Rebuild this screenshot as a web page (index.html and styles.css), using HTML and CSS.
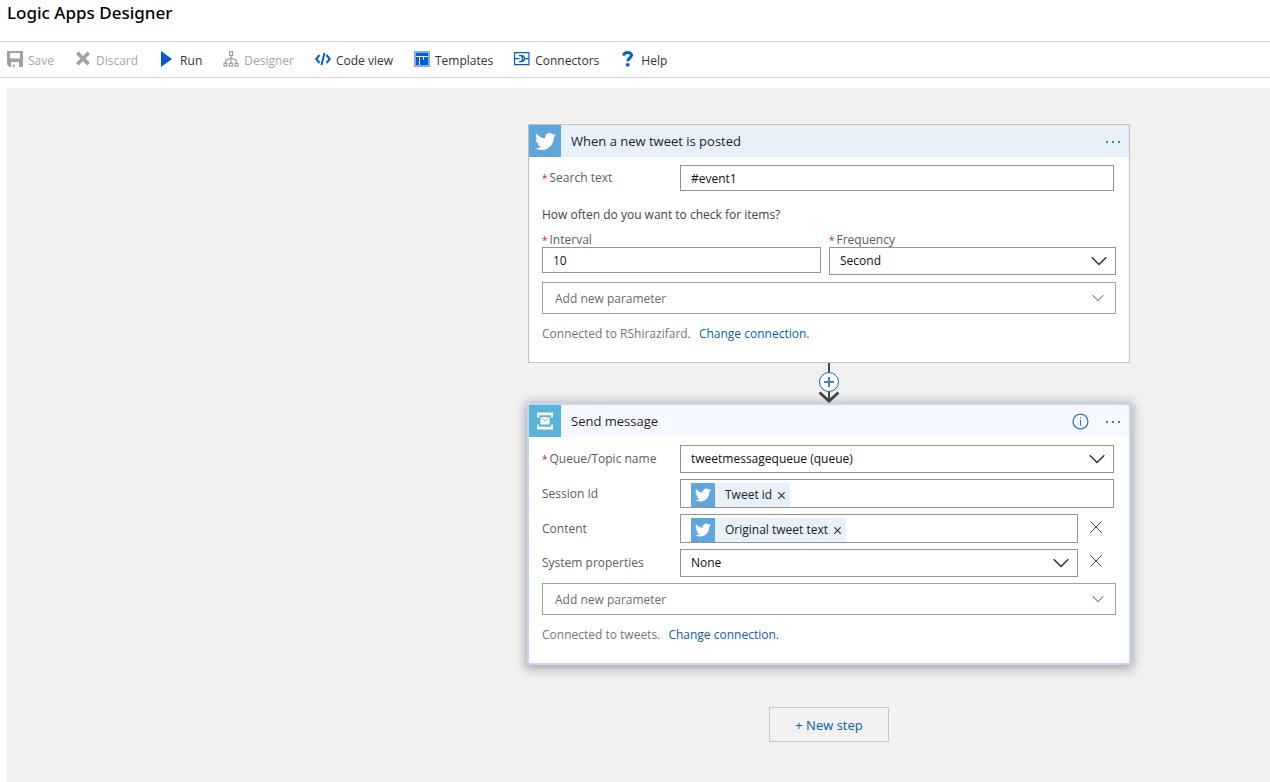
FILE: index.html
```html
<!DOCTYPE html>
<html lang="en">
<head>
<meta charset="utf-8">
<title>Logic Apps Designer</title>
<link rel="stylesheet" href="styles.css">
</head>
<body>
<svg class="sprite" aria-hidden="true">
  <symbol id="bird" viewBox="0 0 24 24"><path d="M23.9 4.6a10 10 0 0 1-2.8.8 4.900 4.900 0 0 0 2.200-2.700c-1 .6-2 1-3.100 1.200a4.900 4.900 0 0 0-8.400 4.500C7.700 8.200 4.100 6.200 1.700 3.200a4.900 4.900 0 0 0 1.500 6.600c-.8 0-1.600-.3-2.200-.6v.1a4.900 4.900 0 0 0 3.900 4.800c-.7.200-1.500.2-2.200.1a4.900 4.900 0 0 0 4.600 3.400A9.900 9.900 0 0 1 0 19.500a14 14 0 0 0 7.500 2.200c9.100 0 14-7.500 14-14v-.6c1-.7 1.800-1.600 2.400-2.500z"/></symbol>
  <symbol id="chevron" viewBox="0 0 16 16"><path d="M.7 4.200 8 11.500l7.300-7.300"/></symbol>
  <symbol id="cross" viewBox="0 0 12 12"><path d="m.4.4 11.200 11.200M11.600.4.4 11.600"/></symbol>
</svg>

<header class="page-header"><h1>Logic Apps Designer</h1></header>

<nav class="toolbar" aria-label="Designer commands">
  <button class="command" type="button" disabled>
    <svg class="command-icon" viewBox="0 0 16 16"><path fill="#a0a0a0" fill-rule="evenodd" d="M0 0h16v16H2.500L0 13.500zM3 2v5.500h10V2zM4 11v5h1.500v-2.500h2V16H12v-5z"/></svg>Save</button>
  <button class="command" type="button" disabled>
    <svg class="command-icon" viewBox="0 0 16 16"><path fill="none" stroke="#a0a0a0" stroke-width="3.600" d="m2.300 1.800 11.400 11.400m0-11.400L2.300 13.200"/></svg>Discard</button>
  <button class="command" type="button">
    <svg class="command-icon" viewBox="0 0 16 16"><path fill="#015cda" d="M2 0v16l11-8z"/></svg>Run</button>
  <button class="command" type="button" disabled>
    <svg class="command-icon" viewBox="0 0 16 16"><path fill="none" stroke="#a0a0a0" stroke-width="1.200" d="M6.500.7h3v3.600h-3zM8 4.300V12M2.500 12V9.500L8 7l5.500 2.500V12M1 12.300h3v2.900H1zm5.500 0h3v2.900h-3zm5.500 0h3v2.900h-3z"/></svg>Designer</button>
  <button class="command" type="button">
    <svg class="command-icon" viewBox="0 0 16 16"><path fill="none" stroke="#015cda" stroke-width="2" d="M4.500 4 1.200 8l3.300 4M11.500 4l3.300 4-3.300 4M9.500 2l-3 12"/></svg>Code view</button>
  <button class="command" type="button">
    <svg class="command-icon" viewBox="0 0 16 16"><path fill="#80aeed" d="M0 0h16v16H0z"/><path fill="#015cda" d="M2 2h12v3H2z"/><path fill="#fff" d="M2 5h12v1H2zM5 6h1v8H5zM9 6h1v3H9z"/><path fill="#015cda" d="M2 6h3v8H2zm4 0h3v8H6zm4 0h4v8h-4zM9 9h1v5H9z"/></svg>Templates</button>
  <button class="command" type="button">
    <svg class="command-icon" viewBox="0 0 16 16"><path fill="none" stroke="#015cda" stroke-width="1.200" d="M.6 1.600h14.300v12H.6zM.6 7.600h5M5 4.600h2.500a3 3 0 0 1 0 6H5M7 6.100h1.500v3H7M10.500 7.600H15"/></svg>Connectors</button>
  <button class="command" type="button">
    <svg class="command-icon" viewBox="0 0 16 16"><path fill="none" stroke="#015cda" stroke-width="2.900" d="M3.600 4.600C4 .5 11.600.5 11.600 4.300c0 2.500-3.800 2.800-3.800 6"/><circle cx="7.700" cy="13.800" r="1.900" fill="#015cda"/></svg>Help</button>
</nav>

<main class="canvas">
  <section class="card" aria-label="When a new tweet is posted">
    <header class="card-header">
      <span class="card-logo twitter"><svg class="logo-bird"><use href="#bird"/></svg></span>
      <h2>When a new tweet is posted</h2>
      <button class="more" type="button" aria-label="More options"><i></i><i></i><i></i></button>
    </header>
    <div class="card-body">
      <div class="row">
        <label class="required" for="search">Search text</label>
        <input class="box" id="search" type="text" value="#event1">
      </div>
      <p class="question">How often do you want to check for items?</p>
      <div class="pair">
        <div class="field">
          <label class="required" for="interval">Interval</label>
          <input class="box" id="interval" type="text" value="10">
        </div>
        <div class="field">
          <label class="required" for="frequency">Frequency</label>
          <div class="select"><select class="box" id="frequency"><option>Second</option></select><svg class="chevron"><use href="#chevron"/></svg></div>
        </div>
      </div>
      <div class="select add"><select class="box" aria-label="Add new parameter"><option>Add new parameter</option></select><svg class="chevron"><use href="#chevron"/></svg></div>
      <p class="connection">Connected to RShirazifard. <a href="#">Change connection.</a></p>
    </div>
  </section>

  <button class="connector" type="button" aria-label="Insert a step">
    <svg viewBox="0 0 24 40"><path fill="none" stroke="#484848" stroke-width="2" d="M12 0v38"/><path fill="none" stroke="#484848" stroke-width="3" d="m2.500 29.500 9.500 8.500 9.500-8.500"/><circle cx="12" cy="19" r="9.500" fill="#fff" stroke="#1068bf"/><path fill="none" stroke="#3c82c8" stroke-width="2" d="M12 14v10M7 19h10"/></svg>
  </button>

  <section class="card selected" aria-label="Send message">
    <header class="card-header">
      <span class="card-logo bus"><svg class="logo-bus" viewBox="0 0 18 18"><path fill="#fff" d="M1 .5h16v5h-2V3.200H3v2.300H1zM1 17.500h16v-5h-2v2.300H3v-2.300H1zM4.500 5h9v7.500h-9z"/><path fill="none" stroke="#59b4d9" stroke-width=".8" d="m4.700 5.300 4.300 3.500 4.300-3.500"/></svg></span>
      <h2>Send message</h2>
      <button class="info" type="button" aria-label="Information"><svg viewBox="0 0 16 16"><circle cx="8" cy="8" r="7" fill="none" stroke="#2b78c5" stroke-width="1.200"/><path fill="#2b78c5" d="M7.500 6.500h1V12h-1zm0-2.500h1v1.200h-1z"/></svg></button>
      <button class="more" type="button" aria-label="More options"><i></i><i></i><i></i></button>
    </header>
    <div class="card-body">
      <div class="row">
        <label class="required" for="queue">Queue/Topic name</label>
        <div class="select"><select class="box" id="queue"><option>tweetmessagequeue (queue)</option></select><svg class="chevron"><use href="#chevron"/></svg></div>
      </div>
      <div class="row">
        <span class="label">Session Id</span>
        <div class="tokens"><span class="token"><span class="token-logo"><svg><use href="#bird"/></svg></span>Tweet id<button type="button" aria-label="Remove Tweet id"><svg><use href="#cross"/></svg></button></span></div>
      </div>
      <div class="row removable">
        <span class="label">Content</span>
        <div class="tokens"><span class="token"><span class="token-logo"><svg><use href="#bird"/></svg></span>Original tweet text<button type="button" aria-label="Remove Original tweet text"><svg><use href="#cross"/></svg></button></span></div>
        <button class="remove" type="button" aria-label="Remove Content"><svg><use href="#cross"/></svg></button>
      </div>
      <div class="row removable">
        <label for="system">System properties</label>
        <div class="select"><select class="box" id="system"><option>None</option></select><svg class="chevron"><use href="#chevron"/></svg></div>
        <button class="remove" type="button" aria-label="Remove System properties"><svg><use href="#cross"/></svg></button>
      </div>
      <div class="select add"><select class="box" aria-label="Add new parameter"><option>Add new parameter</option></select><svg class="chevron"><use href="#chevron"/></svg></div>
      <p class="connection">Connected to tweets. <a href="#">Change connection.</a></p>
    </div>
  </section>

  <button class="new-step" type="button">+ New step</button>
</main>
</body>
</html>
```
FILE: styles.css
```css
* { box-sizing: border-box; }

body {
  display: flex;
  flex-direction: column;
  min-height: 100vh;
  margin: 0;
  background: #fff;
  color: #000;
  font: 12px/16px "Open Sans", "Noto Sans", sans-serif;
}

h1, h2, p { margin: 0; }

button {
  padding: 0;
  border: 0;
  background: none;
  color: inherit;
  font: inherit;
  cursor: pointer;
}

svg { display: block; }
.sprite { display: none; }

/* Page header and toolbar */
.page-header {
  height: 42px;
  padding-left: 7px;
  border-bottom: 1px solid #d2d2d2;
}

.page-header h1 {
  font-family: "Noto Sans", "Open Sans", sans-serif;
  font-size: 17px;
  font-weight: 500;
  line-height: 26px;
}

.toolbar {
  display: flex;
  gap: 21px;
  height: 36px;
  padding: 2px 0 0 7px;
  border-bottom: 1px solid #d2d2d2;
}

.command {
  display: flex;
  align-items: center;
  gap: 5px;
  color: #333;
  white-space: nowrap;
}

.command:disabled { color: #a6a6a6; }

.command-icon {
  width: 16px;
  height: 16px;
  margin-bottom: 3px;
}

/* Design canvas */
.canvas {
  display: flex;
  flex: 1;
  flex-direction: column;
  align-items: center;
  margin: 10px 0 0 7px;
  padding: 36px 0 40px 381px;
  background: #f1f1f1;
}

.card {
  width: 602px;
  border: 1px solid #c1c1c1;
  background: #fff;
}

.selected {
  width: 604px;
  border: 2px solid #c3d5fc;
  box-shadow: 0 2px 10px 2px rgba(0, 0, 0, 0.3);
}

.card-header {
  display: flex;
  align-items: center;
  height: 32px;
  padding-right: 9px;
  background: #e6f1fa;
}

.selected .card-header { background: #f5f9ff; }

.card-header h2 {
  flex: 1;
  padding-left: 10px;
  color: #1f1f1f;
  font-size: 13px;
  font-weight: 400;
}

.card-logo {
  display: grid;
  place-items: center;
  width: 32px;
  height: 32px;
}

.twitter, .token-logo { background: #5ea7dd; fill: #fff; }
.bus { background: #59b4d9; }
.logo-bird { width: 21px; height: 21px; }
.logo-bus { width: 18px; height: 18px; }

.more {
  display: flex;
  gap: 4px;
  padding: 8px 0 6px;
}

.more i {
  width: 2px;
  height: 2px;
  background: #3c82c8;
}

.info { margin-right: 17px; }
.info svg { width: 17px; height: 17px; }

.card-body { padding: 8px 13px 20px; }

.row {
  display: grid;
  grid-template-columns: 138px 1fr;
  align-items: center;
  margin: 0 2px 6px 0;
}

.removable { grid-template-columns: 138px 1fr 36px; }

label, .label { color: #5c5c5c; }

.required::before {
  content: "*";
  margin-right: 2px;
  color: #e81123;
  font-size: 10px;
}

.box {
  width: 100%;
  height: 28px;
  padding: 0 10px;
  border: 1px solid #949494;
  border-radius: 0;
  background: #fff;
  color: #111;
  font: inherit;
  appearance: none;
}

input.box { height: 26px; }

.question {
  margin-top: 16px;
  color: #444;
}

.pair {
  display: grid;
  grid-template-columns: 279fr 287fr;
  gap: 8px;
  margin: 9px 0 7px;
}

.field label {
  display: block;
  height: 15px;
}

.select { display: grid; }
.select > * { grid-area: 1 / 1; }

.chevron {
  place-self: center end;
  width: 16px;
  height: 16px;
  margin-right: 9px;
  fill: none;
  stroke: #333;
  stroke-width: 1.5px;
  pointer-events: none;
}

.add .box {
  height: 32px;
  padding: 2px 12px 0;
  border-color: #a0a0a0;
  color: #6b6b6b;
}

.add .chevron {
  width: 12px;
  height: 12px;
  margin-right: 12px;
  stroke: #8a8a8a;
}

.connection {
  margin-top: 12px;
  color: #767676;
}

.connection a {
  margin-left: 5px;
  color: #055fb2;
  text-decoration: none;
}

.tokens {
  display: flex;
  align-items: flex-end;
  height: 29px;
  padding: 0 10px;
  border: 1px solid #949494;
}

.token {
  display: flex;
  align-items: center;
  height: 24px;
  padding-right: 5px;
  background: #e6f1fa;
  color: #222;
  line-height: 18px;
}

.token-logo {
  display: grid;
  place-items: center;
  width: 24px;
  height: 24px;
  margin-right: 10px;
}

.token-logo svg { width: 16px; height: 16px; }
.token button { margin-left: 6px; }

.token button svg {
  width: 7px;
  height: 7px;
  stroke: #333;
  stroke-width: 2px;
}

.remove {
  justify-self: center;
  padding-bottom: 4px;
}

.remove svg {
  width: 12px;
  height: 12px;
  stroke: #444;
}

/* Flow between steps */
.connector svg {
  width: 24px;
  height: 40px;
}

.new-step {
  width: 120px;
  height: 35px;
  margin-top: 42px;
  border: 1px solid #c8c8c8;
  color: #055fb2;
  font-size: 13px;
}
```
